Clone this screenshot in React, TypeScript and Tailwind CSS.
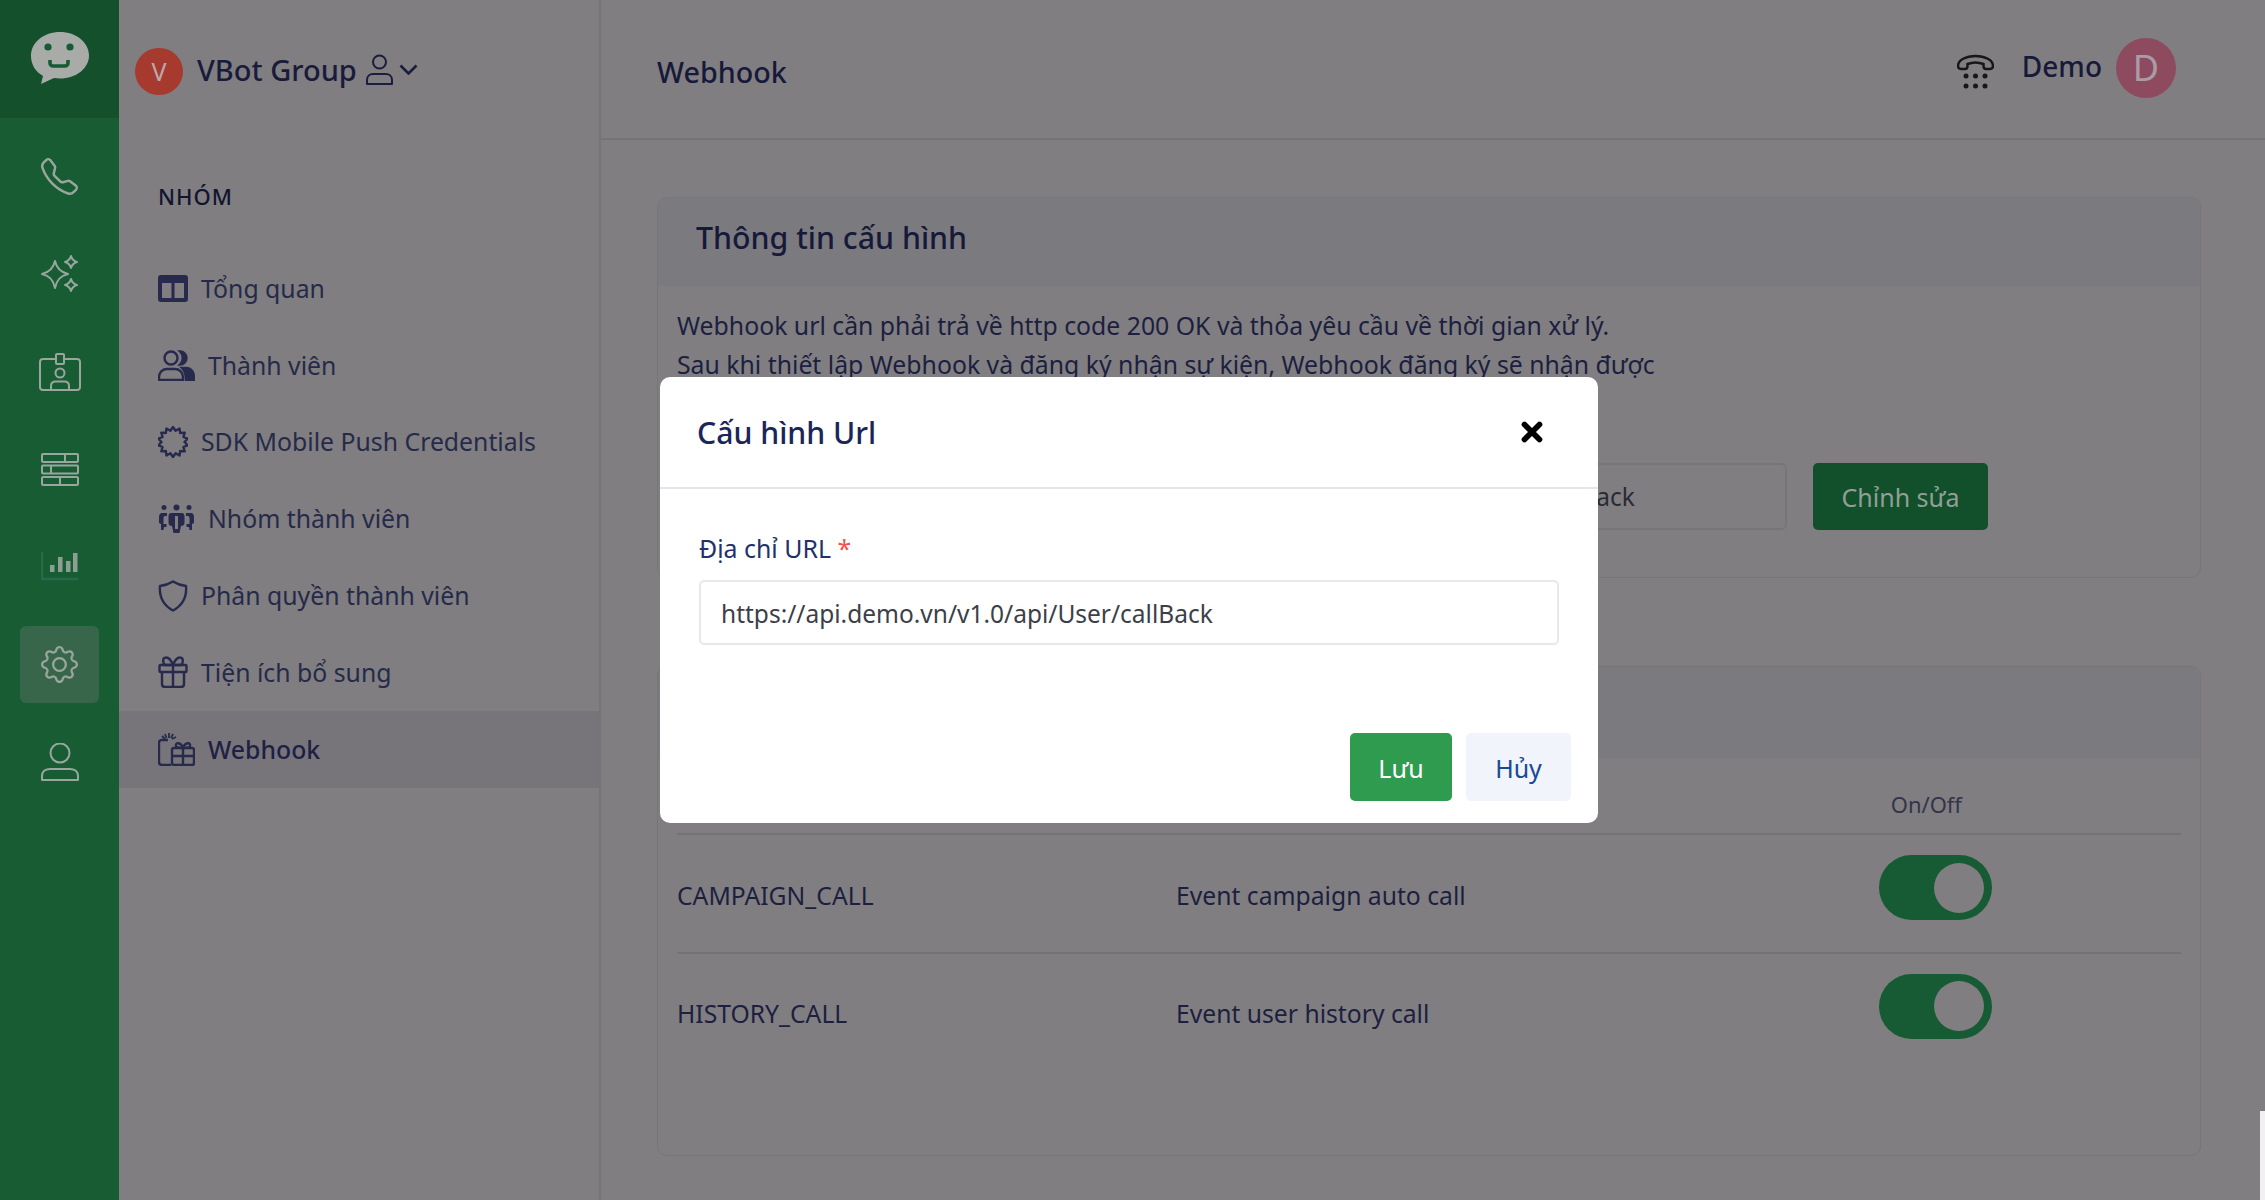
import React from 'react';
import { BsTelephone, BsGear } from 'react-icons/bs';
import { X } from 'lucide-react';

const NAVY = '#272a4c';
const RAIL_ICON = '#98a69d';

const LogoIcon = () => (
  <svg width="60" height="54" viewBox="0 0 60 54">
    <path d="M30 1C14 1 1 11 1 25c0 9 5 16 12 20l-2 8 13-6c2 .3 4 .4 6 .4 16 0 29-10 29-23S46 1 30 1z" fill="#a8aba8" />
    <circle cx="18" cy="16" r="3.600" fill="#165b33" />
    <circle cx="40" cy="16" r="3.600" fill="#165b33" />
    <path d="M20 29v3c0 2 1.500 3 3 3h12c1.500 0 3-1 3-3v-3" fill="none" stroke="#165b33" strokeWidth="3.600" />
  </svg>
);

const SparklesIcon = () => (
  <svg width="38" height="38" viewBox="0 0 38 38" fill="none" stroke={RAIL_ICON} strokeWidth="2" strokeLinejoin="round">
    <path d="M14 6c1.500 7 5 11 13 13-8 2-11.500 6-13 14-1.500-8-5-12-13-14 8-2 11.500-6 13-13z" />
    <path d="M30 1c.8 3 2.500 5 6 6-3.500 1-5.200 3-6 6-.8-3-2.500-5-6-6 3.500-1 5.200-3 6-6z" />
    <path d="M30 24c.8 3 2.500 5 6 6-3.500 1-5.200 3-6 6-.8-3-2.500-5-6-6 3.500-1 5.200-3 6-6z" />
  </svg>
);

const BadgeIcon = () => (
  <svg width="42" height="38" viewBox="0 0 42 38" fill="none" stroke={RAIL_ICON} strokeWidth="2" strokeLinejoin="round">
    <rect x="1" y="6" width="40" height="31" rx="3" />
    <rect x="17" y="1" width="8" height="10" rx="1" fill="#175c33" />
    <circle cx="21" cy="20" r="4.500" />
    <path d="M12 37v-4c0-3 2-4.500 4.500-4.500h9c2.500 0 4.500 1.500 4.500 4.500v4" />
  </svg>
);

const TableIcon = () => (
  <svg width="38" height="33" viewBox="0 0 38 33" fill="none" stroke={RAIL_ICON} strokeWidth="2">
    <rect x="1" y="1" width="36" height="8" rx="1" />
    <rect x="1" y="12.500" width="36" height="8" rx="1" />
    <rect x="1" y="24" width="36" height="8" rx="1" />
    <path d="M24 1v8M10 12.500v8M19 24v8" />
  </svg>
);

const ChartIcon = () => (
  <svg width="38" height="29" viewBox="0 0 38 29" fill="none">
    <path d="M1 0v27h36" stroke="#28694a" strokeWidth="2.500" />
    <path d="M9 20h4.500v-7H9zM17 20h4.500V5H17zM25 20h4.500V9H25zM32 20h4.500V1H32z" fill="#8d9e93" />
  </svg>
);

const PersonIcon = () => (
  <svg width="38" height="38" viewBox="0 0 38 38" fill="none" stroke={RAIL_ICON} strokeWidth="2">
    <circle cx="19" cy="10" r="9.500" />
    <path d="M1 37v-4c0-5 4-7 8-7h20c4 0 8 2 8 7v4z" strokeLinejoin="round" />
  </svg>
);

const ColumnsIcon = () => (
  <svg width="30" height="27" viewBox="0 0 30 27">
    <path fillRule="evenodd" d="M3 0h24a3 3 0 0 1 3 3v21a3 3 0 0 1-3 3H3a3 3 0 0 1-3-3V3a3 3 0 0 1 3-3zm1 8v15h9.500V8zm12.500 0v15H26V8z" fill={NAVY} />
  </svg>
);

const PeopleIcon = () => (
  <svg width="37" height="31" viewBox="0 0 37 31" fill="none" stroke={NAVY} strokeWidth="2.400">
    <circle cx="13" cy="8" r="6.500" />
    <path d="M1 30v-3c0-5 4-8 8-8h8c4 0 8 3 8 8v3z" />
    <path d="M22 1.500a6.500 6.500 0 0 1 0 13 9 9 0 0 0 0-13z" fill={NAVY} />
    <path d="M24 18h4c5 0 8 4 8 9v3h-8c0-5-1-9-4-12z" fill={NAVY} />
  </svg>
);

// rosette outline: teeth alternate between two radii
const burstPoints = Array.from({ length: 28 }, (_, i) => {
  const r = i % 2 === 0 ? 15 : 11.5;
  const a = (i * Math.PI) / 14;
  return `${(15 + r * Math.sin(a)).toFixed(1)},${(16 - r * Math.cos(a)).toFixed(1)}`;
}).join(' ');

const BurstIcon = () => (
  <svg width="30" height="32" viewBox="0 0 30 32" fill="none" stroke={NAVY} strokeWidth="2.400" strokeLinejoin="round">
    <polygon points={burstPoints} />
  </svg>
);

const GroupIcon = () => (
  <svg width="37" height="30" viewBox="0 0 37 30" fill={NAVY}>
    <circle cx="6" cy="3.500" r="2.500" />
    <circle cx="18.500" cy="3.500" r="3" />
    <circle cx="31" cy="3.500" r="2.500" />
    <path d="M4 9h5v3H7c-1 0-1.500 1-1.500 2v6h3v3H6l-.5 3H3v-6l-2-1v-6c0-2 1-4 3-4z" />
    <path d="M33 9h-5v3h2c1 0 1.500 1 1.500 2v6h-3v3H31l.5 3H34v-6l2-1v-6c0-2-1-4-3-4z" />
    <path fillRule="evenodd" d="M13 9h11c1.500 0 2.500 1.500 2.500 3v7c0 2-1.500 3-3.500 3l-1.500 7h-6L14 22c-2 0-3.500-1-3.500-3v-7c0-1.500 1-3 2.500-3zm4 3v13h3V12z" />
  </svg>
);

const ShieldIcon = () => (
  <svg width="30" height="32" viewBox="0 0 30 32" fill="none" stroke={NAVY} strokeWidth="2.400" strokeLinejoin="round">
    <path d="M15 1.500c4 2.500 8 4 13 4.500 .8 9-1 18-13 24.500C3 24 1.200 15 2 6c5-.5 9-2 13-4.500z" />
  </svg>
);

const GiftIcon = () => (
  <svg width="30" height="32" viewBox="0 0 30 32" fill="none" stroke={NAVY} strokeWidth="2.400" strokeLinejoin="round">
    <rect x="1.500" y="9" width="27" height="7" rx="1" />
    <path d="M4 16v12c0 2 1 3 3 3h16c2 0 3-1 3-3V16M15 9v22" />
    <path d="M15 9C13 4 10 1 7.500 1.500 4.500 2 4.500 7 7 9zM15 9c2-5 5-8 7.500-7.500 3 .5 3 5.500.5 7.500z" />
  </svg>
);

const WebhookIcon = () => (
  <svg width="37" height="33" viewBox="0 0 37 33" fill="none" stroke={NAVY} strokeWidth="2.400">
    <path d="M10 7H4c-2 0-3 1-3 3v19c0 2 1 3 3 3h9" />
    <path d="M7 1l1.500 4M11 0v5M15 1l-2 4M4 3l3 3M18 4l-4 2" strokeWidth="1.800" />
    <rect x="14" y="15" width="22" height="17" rx="2" />
    <path d="M14 23h22M25 15v17" />
    <path d="M25 15c-2-6-8-6-7-2 0 2 4 2 7 2zm0 0c2-6 8-6 7-2 0 2-4 2-7 2z" />
  </svg>
);

const DialIcon = () => (
  <svg width="37" height="37" viewBox="0 0 37 37" fill="#171719">
    <path d="M1 12c0-6 8-10 17.500-10S36 6 36 12c0 2-1 3-3 3h-4c-2 0-2.500-1-2.500-3v-2c-5-2-11-2-16 0v2c0 2-.5 3-2.500 3H4c-2 0-3-1-3-3z" fill="none" stroke="#171719" strokeWidth="2.500" />
    <circle cx="9" cy="22" r="2.500" />
    <circle cx="18.500" cy="22" r="2.500" />
    <circle cx="28" cy="22" r="2.500" />
    <circle cx="9" cy="32" r="2.500" />
    <circle cx="18.500" cy="32" r="2.500" />
    <circle cx="28" cy="32" r="2.500" />
  </svg>
);

const UserOutline = () => (
  <svg width="27" height="31" viewBox="0 0 27 31" fill="none" stroke="#1a1d3d" strokeWidth="2">
    <circle cx="13.500" cy="8" r="6.500" />
    <path d="M1 30v-4c0-4 3-6 6-6h13c3 0 6 2 6 6v4z" strokeLinejoin="round" />
  </svg>
);

const Chevron = () => (
  <svg width="19" height="11" viewBox="0 0 19 11" fill="none" stroke="#1a1d3d" strokeWidth="2.600">
    <path d="M1.500 1.500l8 8 8-8" />
  </svg>
);

const railItems = [
  { icon: <BsTelephone size={37} color={RAIL_ICON} />, active: false },
  { icon: <SparklesIcon />, active: false },
  { icon: <BadgeIcon />, active: false },
  { icon: <TableIcon />, active: false },
  { icon: <ChartIcon />, active: false },
  { icon: <BsGear size={37} color={RAIL_ICON} />, active: true },
  { icon: <PersonIcon />, active: false },
];

const menuItems = [
  { label: 'Tổng quan', icon: <ColumnsIcon />, gap: 'w-[43px]' },
  { label: 'Thành viên', icon: <PeopleIcon />, gap: 'w-[50px]' },
  { label: 'SDK Mobile Push Credentials', icon: <BurstIcon />, gap: 'w-[43px]' },
  { label: 'Nhóm thành viên', icon: <GroupIcon />, gap: 'w-[50px]' },
  { label: 'Phân quyền thành viên', icon: <ShieldIcon />, gap: 'w-[43px]' },
  { label: 'Tiện ích bổ sung', icon: <GiftIcon />, gap: 'w-[43px]' },
  { label: 'Webhook', icon: <WebhookIcon />, gap: 'w-[50px]', active: true },
];

const events = [
  { name: 'CAMPAIGN_CALL', desc: 'Event campaign auto call' },
  { name: 'HISTORY_CALL', desc: 'Event user history call' },
];

const Toggle = () => (
  <div className="mb-[12px] flex h-[65px] w-[113px] items-center justify-end rounded-full bg-[#165b33] pr-[8px]">
    <div className="h-[50px] w-[50px] rounded-full bg-[#807e80]" />
  </div>
);

export default function App() {
  return (
    <div className="relative flex h-screen w-full overflow-hidden bg-[#807e80] font-['Noto_Sans',sans-serif] text-[#1c1f40]">
      {/* green rail */}
      <aside className="flex h-full w-[119px] shrink-0 flex-col bg-[#175c33]">
        <div className="flex h-[118px] items-center justify-center bg-[#14502c] pb-[2px]">
          <LogoIcon />
        </div>
        <div className="flex flex-col gap-[20.5px] px-[20px] pt-[20px]">
          {railItems.map((item, i) => (
            <div
              key={i}
              className={`flex h-[77px] items-center justify-center rounded-[6px] ${item.active ? 'bg-[#37664b]' : ''}`}
            >
              {item.icon}
            </div>
          ))}
        </div>
      </aside>

      {/* group menu */}
      <aside className="flex h-full w-[482px] shrink-0 flex-col border-r-2 border-[#767476]">
        <div className="flex h-[140px] items-start pl-[16px] pt-[48px]">
          <div className="flex h-[47px] w-[48px] items-center justify-center rounded-full bg-[#a63a2e] text-[25px] text-[#b9a9a9]">V</div>
          <span className="ml-[14px] text-[29px] font-medium leading-[44px] text-[#181b3c]">VBot Group</span>
          <div className="ml-[9px] mt-[6px]"><UserOutline /></div>
          <div className="ml-[6px] mt-[16px]"><Chevron /></div>
        </div>
        <div className="pl-[39px] pt-[38px] text-[22px] font-medium leading-[36px] tracking-[1px] text-[#12152f]">NHÓM</div>
        <nav className="mt-[36px] flex flex-col">
          {menuItems.map((item) => (
            <div
              key={item.label}
              className={`flex h-[76.800px] items-center pl-[39px] ${item.active ? 'bg-[#77757a] font-medium text-[#1e2145]' : 'text-[#262a4a]'}`}
            >
              <span className={`flex shrink-0 items-center ${item.gap}`}>{item.icon}</span>
              <span className="text-[24.800px]">{item.label}</span>
            </div>
          ))}
        </nav>
      </aside>

      {/* main */}
      <main className="min-w-0 flex-1">
        <header className="flex h-[140px] items-start justify-between border-b-2 border-[#757375] pl-[56px] pr-[89px]">
          <h1 className="pt-[50px] text-[28.700px] font-medium leading-[44px] text-[#161939]">Webhook</h1>
          <div className="flex items-start pt-[38px]">
            <div className="mt-[16px]"><DialIcon /></div>
            <span className="ml-[28px] mt-[8px] text-[28px] font-medium leading-[40px] text-[#161939]">Demo</span>
            <div className="ml-[14px] flex h-[60px] w-[60px] items-center justify-center rounded-full bg-[#8e4b5f] text-[36px] text-[#a89ca6]">D</div>
          </div>
        </header>

        <div className="pl-[56px] pr-[64px] pt-[57px]">
          <section className="h-[381px] rounded-[10px] border border-[#777578]">
            <div className="flex h-[88px] items-start rounded-t-[10px] bg-[#7b7a7e] pl-[38px] pt-[18px]">
              <h2 className="text-[30.300px] font-medium leading-[44px] text-[#161939]">Thông tin cấu hình</h2>
            </div>
            <div className="px-[19px] pt-[20px] text-[24.800px] leading-[39px]">
              <p>Webhook url cần phải trả về http code 200 OK và thỏa yêu cầu về thời gian xử lý.</p>
              <p>Sau khi thiết lập Webhook và đăng ký nhận sự kiện, Webhook đăng ký sẽ nhận được</p>
            </div>
            <div className="ml-[465px] mt-[79px] flex items-center gap-[26px]">
              <div className="flex h-[67px] w-[664px] items-center rounded-[6px] border-2 border-[#777578] pl-[18px] pt-[2px] text-[24.500px] text-[#2a2a35]">
                https://api.demo.vn/v1.0/api/User/callBack
              </div>
              <button className="h-[67px] w-[175px] rounded-[5px] bg-[#12502b] pt-[2px] text-[25px] text-[#929f96]">Chỉnh sửa</button>
            </div>
          </section>

          <section className="mt-[88px] h-[490px] rounded-[10px] border border-[#777578]">
            <div className="h-[91px] rounded-t-[10px] bg-[#7b7a7e]" />
            <div className="mx-[19px]">
              <div className="flex h-[77px] items-center justify-end border-b-2 border-[#747274] pr-[219px] pt-[18px] text-[22px] text-[#35344a]">On/Off</div>
              {events.map((ev, i) => (
                <div key={ev.name} className={`flex items-center ${i === 0 ? 'h-[119px] border-b-2 border-[#747274]' : 'h-[116px]'}`}>
                  <span className="w-[499px] pt-[4px] text-[24.700px]">{ev.name}</span>
                  <span className="flex-1 pt-[4px] text-[24.700px]">{ev.desc}</span>
                  <div className="w-[302px]"><Toggle /></div>
                </div>
              ))}
            </div>
          </section>
        </div>
      </main>

      {/* modal */}
      <div className="absolute left-[660px] top-[377px] h-[446px] w-[938px] rounded-[10px] bg-white">
        <div className="flex h-[112px] items-center justify-between border-b-2 border-[#e4e6ef] pl-[37px] pr-[51px]">
          <h3 className="pt-[2px] text-[30.200px] font-medium text-[#1b2559]">Cấu hình Url</h3>
          <X size={30} strokeWidth={4.500} color="#000" />
        </div>
        <div className="px-[39px] pt-[41px]">
          <label className="block text-[24.900px] leading-[36px] text-[#24306b]">
            Địa chỉ URL <span className="text-[#f0524f]">*</span>
          </label>
          <div className="mt-[14px] flex h-[65px] items-center rounded-[5px] border-2 border-[#e6e8ee] pl-[20px] pt-[4px] text-[24.500px] text-[#3c3f47]">
            https://api.demo.vn/v1.0/api/User/callBack
          </div>
        </div>
        <div className="mt-[88px] flex justify-end gap-[14px] pr-[27px]">
          <button className="h-[68px] w-[102px] rounded-[5px] bg-[#2e9b4f] pt-[3px] text-[25px] text-white">Lưu</button>
          <button className="h-[68px] w-[105px] rounded-[5px] bg-[#f1f4fb] pt-[3px] text-[25px] text-[#174a93]">Hủy</button>
        </div>
      </div>

      {/* sliver at the window edge */}
      <div className="absolute bottom-0 right-0 h-[89px] w-[5px] bg-[#f3f0f4]" />
    </div>
  );
}
